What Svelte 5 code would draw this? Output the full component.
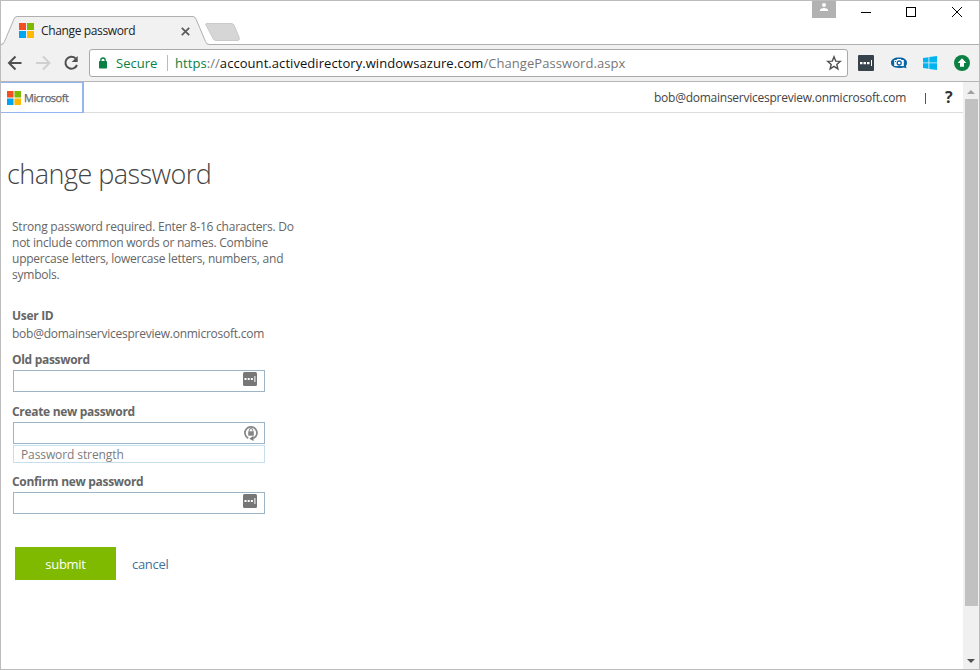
<script>
  const squares = [
    { x: 0, y: 0, fill: '#f25022' },
    { x: 8, y: 0, fill: '#7fba00' },
    { x: 0, y: 8, fill: '#00a4ef' },
    { x: 8, y: 8, fill: '#ffb900' },
  ];
  const user = 'bob@domainservicespreview.onmicrosoft.com';
</script>

{#snippet logo(size)}
  <svg width={size} height={size} viewBox="0 0 15 15">
    {#each squares as s}
      <rect x={s.x} y={s.y} width="7" height="7" fill={s.fill} />
    {/each}
  </svg>
{/snippet}

{#snippet dots()}
  <svg class="dots" width="14" height="14" viewBox="0 0 14 14">
    <rect width="14" height="14" rx="1.5" fill="#777" />
    <path d="M1.500 6h2v2h-2zM4.700 6h2v2h-2zM7.900 6h2v2h-2zM11.400 4h1v6h-1z" fill="#fff" />
  </svg>
{/snippet}

<div class="window">
  <div class="tabstrip">
    <div class="tab">
      <svg class="shape" width="242" height="44" viewBox="0 0 242 44">
        <path d="M0 43.500H1.500Q2.500 43 3.500 40.500L13 18Q14 15.500 16 15.500H192Q194 15.500 195 18L204.500 40.500Q205.500 43.500 207 43.500H208V44H0Z" fill="#f1f1f1" />
        <path d="M0 43.500Q2.500 43.500 3.500 40.500L13 18Q14 15.500 16 15.500H192Q194 15.500 195 18L204.500 40.500Q205.500 43.500 208 43.500H242" fill="none" stroke="#b0b0b0" />
        <path d="M206 22.500H230Q232 22.500 233 24L238 36Q239 39.500 237 39.500H215Q213 39.500 212 37.500L205 24Q204 22.500 206 22.500Z" fill="#d6d6d6" stroke="#cacaca" />
      </svg>
      <span class="favicon">{@render logo(15)}</span>
      <span class="tabtitle">Change password</span>
      <svg class="close" width="9" height="9" viewBox="0 0 9 9"><path d="M.8 .8l7.400 7.400M8.200 .8l-7.400 7.400" stroke="#5a5a5a" stroke-width="1.700" /></svg>
    </div>
    <div class="controls">
      <svg class="person" width="24" height="17" viewBox="0 0 24 17">
        <rect width="24" height="17" fill="#b2b2b2" />
        <circle cx="12" cy="4" r="2" fill="#fff" />
        <path d="M8 10V8.500Q9 7 12 7T16 8.500V10Z" fill="#fff" />
      </svg>
      <svg width="104" height="22" viewBox="0 0 104 22" fill="none" stroke="#000">
        <path d="M0 11.500H10" />
        <rect x="45.500" y="6.500" width="9" height="9" />
        <path d="M91 6l10 10M101 6l-10 10" />
      </svg>
    </div>
  </div>

  <div class="toolbar">
    <svg class="nav" width="78" height="18" viewBox="0 0 78 18" fill="none" stroke-width="2">
      <path d="M15.500 9H3.500M9.500 2.500L3 9L9.500 15.500" stroke="#4f4f4f" />
      <path d="M30 9H43M37 2.500L43.500 9L37 15.500" stroke="#d0d0d0" />
      <path d="M69.500 4.300A6 6 0 1 0 71 11" stroke="#4f4f4f" />
      <path d="M71.700 2V8H65.700Z" fill="#4f4f4f" />
    </svg>
    <div class="omnibox">
      <svg class="lock" width="8" height="12" viewBox="0 0 8 12">
        <rect y="4" width="8" height="7.500" rx=".8" fill="#0b8043" />
        <path d="M1.800 5V3.200a2.200 2.200 0 0 1 4.400 0V5" fill="none" stroke="#0b8043" stroke-width="1.300" />
      </svg>
      <span class="secure">Secure</span>
      <span class="divider"></span>
      <span class="url"><span class="scheme">https</span><i>://</i>account.activedirectory.windowsazure.com<i>/ChangePassword.aspx</i></span>
      <svg class="star" width="16" height="16" viewBox="0 0 16 16">
        <path d="M8 1.800L9.700 6.100L14.300 6.400L10.800 9.400L11.900 13.900L8 11.400L4.100 13.900L5.200 9.400L1.700 6.400L6.300 6.100Z" fill="none" stroke="#505050" stroke-width="1.400" />
      </svg>
    </div>
    <div class="extensions">
      <svg width="16" height="16" viewBox="0 0 16 16">
        <rect width="16" height="16" rx="1" fill="#36424c" />
        <path d="M2 7h2.500v2.300H2zM5.500 7H8v2.300H5.500zM9 7h2.500v2.300H9zM13 5h1v6h-1z" fill="#fff" />
      </svg>
      <svg width="16" height="16" viewBox="0 0 16 16">
        <path d="M8 2.500c5 0 8 2 8 5.200 0 1.600-.5 2.500-1.200 3.300l.8 2.200-3-.7C11.200 13 9.500 13 8 13c-5 0-8-1.900-8-5.200S3 2.500 8 2.500Z" fill="#0864a5" />
        <path d="M3.200 5h2.300l.7-1h3.600l.7 1h2.300v6H3.200Z" fill="#fff" />
        <circle cx="8.200" cy="8" r="2" fill="#fff" stroke="#0864a5" stroke-width="1.300" />
        <rect x="4" y="6" width="1" height="1" fill="#0864a5" />
      </svg>
      <svg width="14" height="14" viewBox="0 0 14 14" fill="#00b4f0">
        <path d="M0 2L5.500 1.200V6.500H0ZM6.300 1L14 0V6.500H6.300ZM0 7.300H5.500V12.700L0 12ZM6.300 7.300H14V14L6.300 12.900Z" />
      </svg>
      <svg width="16" height="16" viewBox="0 0 16 16">
        <circle cx="8" cy="8" r="8" fill="#0b8043" />
        <path d="M8 3.200L12.300 8H10V11.700H6V8H3.700Z" fill="#fff" />
      </svg>
    </div>
  </div>

  <div class="viewport">
    <main>
      <header>
        <div class="brand">{@render logo(14)}<span>Microsoft</span></div>
        <div class="account"><span class="mail">{user}</span><span class="bar"></span><b>?</b></div>
      </header>
      <h1>change password</h1>
      <p class="rules">
        Strong password required. Enter 8-16 characters. Do<br />
        not include common words or names. Combine<br />
        uppercase letters, lowercase letters, numbers, and<br />
        symbols.
      </p>
      <form>
        <div class="label uid">User ID</div>
        <div class="userid mail">{user}</div>
        <div class="label old">Old password</div>
        <div class="field">{@render dots()}</div>
        <div class="label create">Create new password</div>
        <div class="field">
          <svg class="cycle" width="14" height="16" viewBox="0 0 14 16" fill="none">
            <path d="M4.200 13.200A6 6 0 1 1 9.500 13.300" stroke="#858585" stroke-width="1.700" />
            <path d="M9.500 10.800V16L5.500 13.700Z" fill="#777" />
            <rect x="4.200" y="6.300" width="5.600" height="4.400" fill="#858585" />
            <path d="M5.300 6.500V5.200a1.700 1.700 0 0 1 3.400 0V6.500" stroke="#858585" />
          </svg>
        </div>
        <div class="strength"><span>Password strength</span></div>
        <div class="label confirm">Confirm new password</div>
        <div class="field">{@render dots()}</div>
        <div class="actions">
          <button type="button">submit</button>
          <a href="#cancel">cancel</a>
        </div>
      </form>
    </main>
    <div class="scrollbar">
      <svg width="8" height="4" viewBox="0 0 8 4"><path d="M0 4L4 0L8 4Z" fill="#a0a0a0" /></svg>
      <div class="thumb"></div>
      <svg class="down" width="8" height="4" viewBox="0 0 8 4"><path d="M0 0H8L4 4Z" fill="#505050" /></svg>
    </div>
  </div>
</div>

<style>
  :global(body) { margin: 0; background: #fff; }
  .window, .window * { box-sizing: border-box; }
  .window {
    width: 980px; height: 670px; border: 1px solid #bcbcbc; background: #fff;
    display: flex; flex-direction: column; overflow: hidden;
    font-family: "Open Sans", "Noto Sans", sans-serif; font-size: 12px; color: #666; white-space: nowrap;
  }
  svg { display: block; flex: none; }
  .tabstrip { height: 44px; flex: none; display: flex; justify-content: space-between; border-bottom: 1px solid #b0b0b0; }
  .tab { position: relative; width: 242px; height: 44px; display: flex; padding-left: 18px; }
  .shape { position: absolute; left: 0; top: 0; }
  .favicon { position: relative; margin-top: 22px; width: 22px; }
  .tabtitle { position: relative; margin-top: 21px; line-height: 18px; width: 140px; color: #222; letter-spacing: -.36px; }
  .close { position: relative; margin-top: 26px; }
  .controls { display: flex; gap: 25px; padding-right: 14px; }
  .controls svg:last-child { margin-right: 0; }
  .person { margin-right: 0; }
  .toolbar { height: 37px; flex: none; display: flex; align-items: center; background: #f1f1f1; border-bottom: 1px solid #b5b5b5; padding: 0 9px 0 5px; }
  .nav { width: 78px; margin-right: 5px; }
  .omnibox { width: 759px; flex: none; height: 28px; display: flex; align-items: center; background: #fff; border: 1px solid #a9a9a9; border-radius: 3px; }
  .lock { margin-left: 9px; }
  .secure { color: #0b8043; margin-left: 9px; width: 42px; font-size: 13px; }
  .divider { width: 1px; height: 16px; background: #bbb; margin: 0 7px 0 9px; }
  .url { flex: 1; color: #111; font-size: 13px; letter-spacing: .06px; }
  .url i { font-style: normal; color: #777; }
  .scheme { color: #0b8043; }
  .star { margin-right: 5px; }
  .extensions { flex: 1; display: flex; align-items: center; justify-content: space-between; padding-left: 10px; }
  .viewport { flex: 1; display: flex; min-height: 0; }
  main { flex: 1; }
  header { height: 31px; display: flex; justify-content: space-between; border-bottom: 1px solid #dcdcdc; }
  .brand { width: 83px; height: 31px; border: 1px solid #94b5f2; border-width: 1px 2px 1px 0; display: flex; align-items: center; padding-left: 6px; gap: 3px; }
  .brand span { color: #666; font-size: 11px; letter-spacing: -.45px; -webkit-text-stroke: .25px #666; }
  .account { display: flex; align-items: center; color: #444; padding-right: 9px; }
  .mail { letter-spacing: -.25px; }
  .bar { width: 1px; height: 11px; background: #555; margin: 2px 19px 0 19px; }
  .account b { color: #333; font-size: 16px; width: 9px; }
  h1 { margin: 41px 0 0 6px; font-size: 27px; line-height: 40px; font-weight: 300; color: #444; letter-spacing: -.53px; }
  .rules { margin: 25px 0 0 11px; line-height: 16px; letter-spacing: -.23px; }
  form { padding-left: 11px; }
  .label { font-weight: 700; line-height: 18px; letter-spacing: -.31px; }
  .uid { margin-top: 24px; }
  .userid { line-height: 18px; }
  .old { margin-top: 8px; }
  .field { width: 252px; height: 22px; margin: 1px 0 0 1px; border: 1px solid #9cb4c6; display: flex; justify-content: flex-end; padding-right: 7px; }
  .dots { margin-top: 1px; }
  .cycle { margin: 2px -1px 0 0; }
  .create { margin-top: 11px; }
  .strength { width: 252px; height: 18px; margin: 1px 0 0 1px; border: 1px solid #c6dfee; padding-left: 7px; line-height: 18px; color: #7c7c7c; letter-spacing: -.1px; }
  .confirm { margin-top: 10px; }
  .actions { display: flex; align-items: center; margin: 33px 0 0 3px; gap: 16px; font-size: 13px; letter-spacing: -.3px; }
  button { width: 101px; height: 33px; padding: 0; border: 0; background: #7fba00; color: #fff; font: inherit; letter-spacing: inherit; }
  a { color: #44709b; text-decoration: none; }
  .scrollbar { width: 16px; background: #f0f0f0; padding-left: 2px; }
  .scrollbar svg { margin: 8px 0 0 2px; }
  .thumb { width: 13px; height: 507px; margin-top: 5px; background: #c1c1c1; }
  .scrollbar .down { margin-top: 53px; }
</style>
